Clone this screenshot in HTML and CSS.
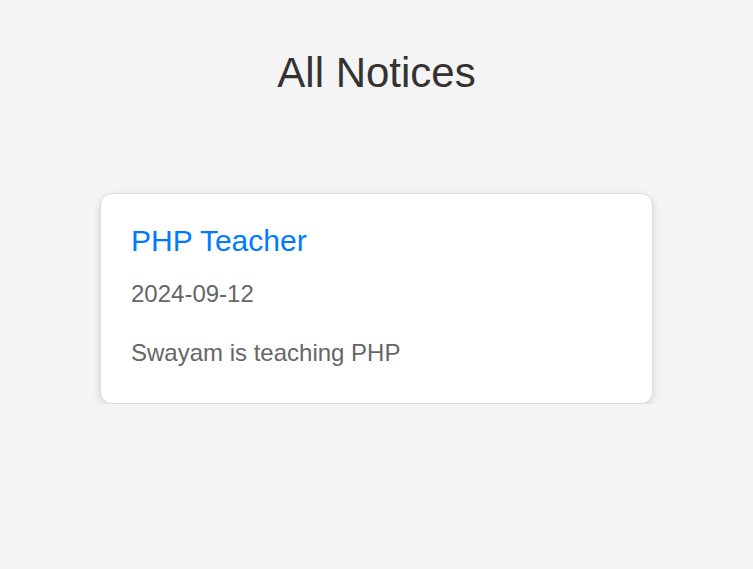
FILE: index.html
```html
<!DOCTYPE html>
<html lang="en">
<head>
<meta charset="utf-8">
<title>All Notices</title>
<link rel="stylesheet" href="styles.css">
</head>
<body>
<main class="page">
  <h1 class="page-title">All Notices</h1>
  <section class="notice-list">
    <article class="notice-card">
      <h3 class="notice-title">PHP Teacher</h3>
      <p class="notice-date">2024-09-12</p>
      <p class="notice-body">Swayam is teaching PHP</p>
    </article>
  </section>
</main>
</body>
</html>
```

FILE: styles.css
```css
html, body {
  margin: 0;
  padding: 0;
  background: #f4f4f4;
  font-family: "Liberation Sans", Arial, sans-serif;
}

.page {
  display: flex;
  flex-direction: column;
  align-items: center;
  padding-top: 49px;
}

.page-title {
  margin: 0 0 96px;
  font-size: 42px;
  font-weight: normal;
  color: #333;
  line-height: 48px;
}

.notice-list {
  display: flex;
  flex-direction: column;
  gap: 30px;
}

.notice-card {
  box-sizing: border-box;
  width: 553px;
  background: #fff;
  border: 1px solid #ddd;
  border-radius: 12px;
  box-shadow: 0 3px 8px rgba(0, 0, 0, 0.12);
  padding: 30px 30px 31px;
}

.notice-title {
  margin: 0 0 22px;
  font-size: 30px;
  font-weight: normal;
  line-height: 34px;
  color: #007bff;
}

.notice-date {
  margin: 0 0 32px;
  font-size: 24px;
  line-height: 27px;
  color: #666;
}

.notice-body {
  margin: 0 0 6px;
  font-size: 24px;
  line-height: 27px;
  color: #666;
}
```
